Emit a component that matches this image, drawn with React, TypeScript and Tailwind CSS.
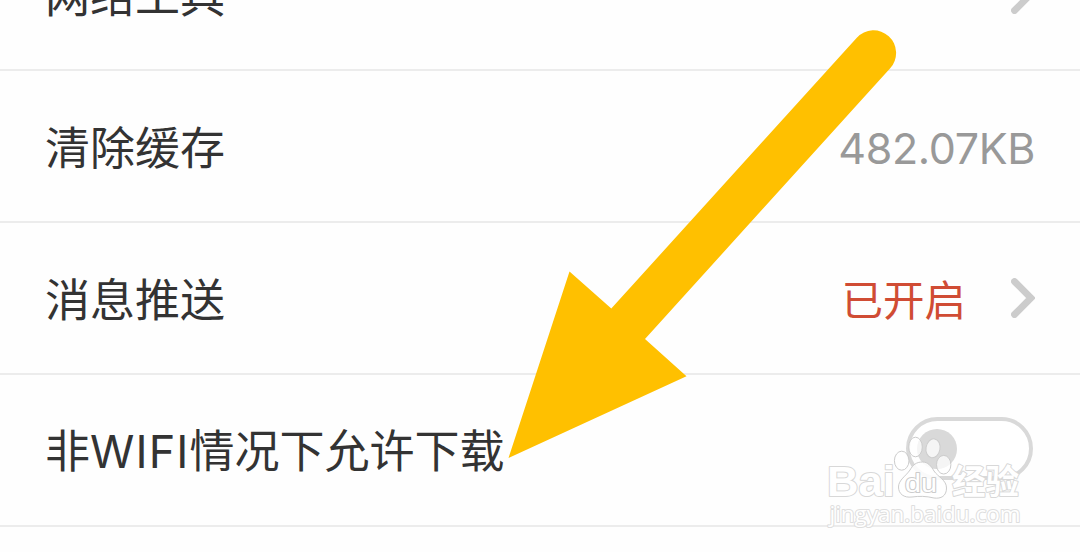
import type { ReactNode } from 'react'

interface RowProps {
  label: ReactNode
  children?: ReactNode
}

function SettingRow({ label, children }: RowProps) {
  return (
    <div className="flex h-[152px] flex-none items-center justify-between border-b-2 border-[#ececec] pl-[45px] pr-[45px]">
      <span className="whitespace-nowrap text-[45px] leading-[60px] text-[#333333]">{label}</span>
      <div className="flex items-center">{children}</div>
    </div>
  )
}

function Chevron() {
  return (
    <svg width="24" height="40" viewBox="0 0 24 40" fill="none" className="flex-none">
      <path d="M3.5 3.5 20 20 3.5 36.5" stroke="#cccccc" strokeWidth="6.8" strokeLinecap="round" strokeLinejoin="miter" />
    </svg>
  )
}

function Toggle() {
  return (
    <div className="mb-[3px] mr-[2px] flex h-[63px] w-[127px] items-center rounded-full border-[4px] border-[#d9d9d9] bg-white pl-[7px]">
      <div className="size-10 rounded-full bg-[#d9d9d9]" />
    </div>
  )
}

function Arrow() {
  return (
    <svg width="1080" height="552" viewBox="0 0 1080 552" className="absolute left-0 top-0">
      <path
        d="M508.5 458 569.5 271.5 611.3 308.5 856.8 37.7A22.6 22.6 0 0 1 890.2 68.2L645 339 686.5 376.2Z"
        fill="#ffc000"
      />
    </svg>
  )
}

function Watermark() {
  return (
    <svg width="220" height="130" viewBox="820 410 220 130" className="absolute left-[820px] top-[410px]">
      <g fill="#ffffff" fillOpacity="0.72" stroke="#cccccc" strokeWidth="1">
        <ellipse cx="901.7" cy="460.7" rx="7.3" ry="9.5" />
        <ellipse cx="915.5" cy="447" rx="6.8" ry="9.8" />
        <ellipse cx="933" cy="448.3" rx="7" ry="9.5" transform="rotate(10 933 448.3)" />
        <ellipse cx="943.7" cy="464.7" rx="7.2" ry="9.3" />
        <path
          d="M922.5 462C928 462 931 466 934 471C938 477 946.5 480 946.5 488C946.5 496 941 499 934 498C926 496 919 496 912 497C904 498 898.5 494 898.5 487C898.5 480 906 476 910 470C913 465 916 462 922.5 462Z"
          fillOpacity="0.85"
        />
      </g>
      <g fill="#ffffff" stroke="#d8d8d8" strokeWidth="2" paintOrder="stroke" strokeLinejoin="round">
        <text x="827" y="496" fontFamily="Liberation Sans" fontWeight="bold" fontSize="43" textLength="68" lengthAdjust="spacingAndGlyphs">Bai</text>
        <text x="905" y="491.5" fontFamily="Liberation Sans" fontSize="26" textLength="32" lengthAdjust="spacingAndGlyphs" stroke="#cccccc">du</text>
        <text x="952" y="494" fontFamily="Noto Sans CJK SC" fontWeight="bold" fontSize="34" textLength="67" lengthAdjust="spacingAndGlyphs">经验</text>
        <text x="829.5" y="522" fontFamily="Open Sans" fontSize="21.5" textLength="191" lengthAdjust="spacingAndGlyphs" stroke="#dedede">jingyan.baidu.com</text>
      </g>
    </svg>
  )
}

export default function App() {
  return (
    <div className="relative h-[552px] w-[1080px] overflow-hidden bg-[#fefefe] font-['Noto_Sans_CJK_SC',sans-serif]">
      <div className="-mt-[81px] flex flex-col">
        <SettingRow label="网络工具">
          <Chevron />
        </SettingRow>
        <SettingRow label="清除缓存">
          <span className="pt-1 font-['Inter',sans-serif] text-[43px] leading-[60px] tracking-[-0.35px] text-[#999999]">482.07KB</span>
        </SettingRow>
        <SettingRow label="消息推送">
          <span className="mr-[45px] text-[41.5px] leading-[60px] text-[#d04c34]">已开启</span>
          <Chevron />
        </SettingRow>
        <SettingRow
          label={
            <>
              非<span className="font-['Inter',sans-serif] tracking-[1.1px]">WIFI</span>情况下允许下载
            </>
          }
        >
          <Toggle />
        </SettingRow>
      </div>
      <Arrow />
      <Watermark />
    </div>
  )
}
